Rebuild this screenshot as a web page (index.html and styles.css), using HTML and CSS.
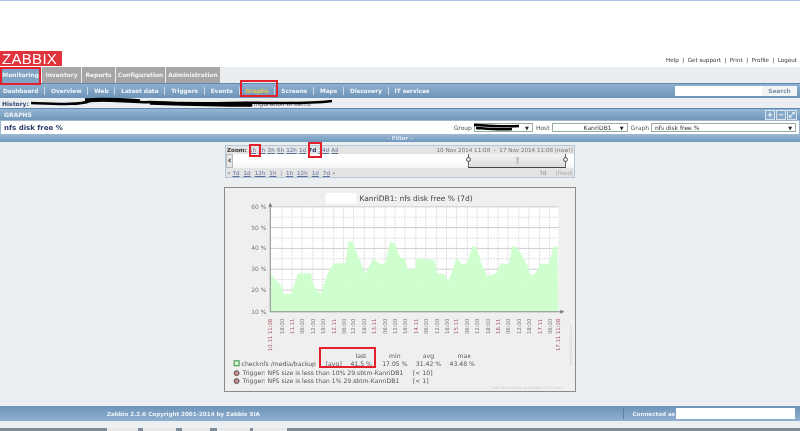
FILE: index.html
```html
<!DOCTYPE html>
<html lang="en">
<head>
<meta charset="utf-8">
<title>Zabbix graphs</title>
<link rel="stylesheet" href="styles.css">
</head>
<body>
<header class="top">
  <div class="logo">ZABBIX</div>
  <nav class="toplinks"><a>Help</a><i>|</i><a>Get support</a><i>|</i><a>Print</a><i>|</i><a>Profile</a><i>|</i><a>Logout</a></nav>
</header>
<nav class="menu">
  <a class="tab tab-on tab-mon">Monitoring</a><a class="tab tab-inv">Inventory</a><a class="tab tab-rep">Reports</a><a class="tab tab-con">Configuration</a><a class="tab tab-adm">Administration</a>
</nav>
<nav class="submenu">
  <a>Dashboard</a><i></i><a>Overview</a><i></i><a>Web</a><i></i><a>Latest data</a><i></i><a>Triggers</a><i></i><a>Events</a><i></i><a class="sub-on">Graphs</a><i></i><a>Screens</a><i></i><a>Maps</a><i></i><a>Discovery</a><i></i><a>IT services</a>
  <div class="search"><span class="search-in"></span><span class="search-btn">Search</span></div>
</nav>
<div class="history"><b>History:</b><span class="hist-rest">Configuration of items</span></div>
<div class="bar graphs-bar"><span>GRAPHS</span>
  <div class="bar-icons"><span class="ic">+</span><span class="ic">−</span><span class="ic">⤢</span></div>
</div>
<div class="title-row">
  <h1>nfs disk free %</h1>
  <div class="pickers">
    <label>Group</label><span class="sel sel-group"><em>▼</em></span>
    <label>Host</label><span class="sel sel-host"><u>KanriDB1</u><em>▼</em></span>
    <label>Graph</label><span class="sel sel-graph"><u class="left">nfs disk free %</u><em>▼</em></span>
  </div>
</div>
<div class="bar filter-bar">- Filter -</div>
<main class="content">
  <section class="scroller">
    <div class="sc-row sc-top">
      <div class="zoomlinks"><b>Zoom:</b><a>1h</a><a>2h</a><a>3h</a><a>6h</a><a>12h</a><a>1d</a><b class="z7">7d</b><a>14d</a><a>All</a></div>
      <div class="range">10 Nov 2014 11:08 &nbsp;-&nbsp; 17 Nov 2014 11:08 (now!)</div>
    </div>
    <div class="sc-mid"><span class="sc-arrow">‹</span>
      <div class="slider"><span class="knob knob-l"></span><span class="grip"></span><span class="knob knob-r"></span></div>
    </div>
    <div class="sc-row sc-bot">
      <div class="navlinks">&laquo;<a>7d</a><a>1d</a><a>12h</a><a>1h</a> | <a>1h</a><a>12h</a><a>1d</a><a>7d</a>&raquo;</div>
      <div class="fixed"><span>7d</span><span class="fx">|fixed|</span></div>
    </div>
  </section>
  <section class="graph">
    <svg class="chart" viewBox="224 186 352 205" width="352" height="205">
      <rect class="plot" x="269" y="205" width="291" height="106"/>
      <path class="grid-h" d="M269 226H560M269 247H560M269 268H560M269 289H560M269 205H560"/>
      <path class="grid-h2" d="M269 215.500H560M269 236.500H560M269 257.500H560M269 278.500H560M269 300H560"/>
      <path class="grid-v" d="M281 205V311M291 205V311M301 205V311M312 205V311M322 205V311M333 205V311M343 205V311M353 205V311M364 205V311M374 205V311M385 205V311M395 205V311M405 205V311M416 205V311M426 205V311M437 205V311M447 205V311M457 205V311M468 205V311M478 205V311M489 205V311M499 205V311M509 205V311M520 205V311M530 205V311M541 205V311M551 205V311"/>
      <path class="area" d="M269 311V272L280 285L283 293H290L297 272H310L313 285L320 293L327 272L333 262H345L348 240H352L360 260L365 272L373 257L380 263L385 262L390 240L395 242L400 256L405 258L408 268H415L417 257L435 259L438 272L445 273L449 280L457 257L463 263L468 262L473 245H477L482 262L488 275L497 272L502 262L510 263L513 245H518L528 263L532 274L537 272L542 262L550 263L555 245H559L560 311Z"/>
      <path class="axis" d="M269 204V311H563"/>
      <path class="axis-tip" d="M269 201L267 205H271ZM566 311L562 309V313Z"/>
      <rect class="mask" x="325" y="191" width="31" height="11"/>
      <text class="g-title" x="359" y="199">KanriDB1: nfs disk free % (7d)</text>
      <text class="yl" x="265" y="207">60 %</text><text class="yl" x="265" y="228">50 %</text><text class="yl" x="265" y="249">40 %</text><text class="yl" x="265" y="270">30 %</text><text class="yl" x="265" y="291">20 %</text><text class="yl" x="265" y="313">10 %</text>
      <text class="tk red" transform="rotate(-90 271 318)" x="271" y="318">10.11 11:08</text>
      <text class="tk" transform="rotate(-90 283 318)" x="283" y="318">18:00</text>
      <text class="tk red" transform="rotate(-90 293 318)" x="293" y="318">11.11</text>
      <text class="tk" transform="rotate(-90 303 318)" x="303" y="318">06:00</text>
      <text class="tk" transform="rotate(-90 314 318)" x="314" y="318">12:00</text>
      <text class="tk" transform="rotate(-90 324 318)" x="324" y="318">18:00</text>
      <text class="tk red" transform="rotate(-90 335 318)" x="335" y="318">12.11</text>
      <text class="tk" transform="rotate(-90 345 318)" x="345" y="318">06:00</text>
      <text class="tk" transform="rotate(-90 355 318)" x="355" y="318">12:00</text>
      <text class="tk" transform="rotate(-90 366 318)" x="366" y="318">18:00</text>
      <text class="tk red" transform="rotate(-90 376 318)" x="376" y="318">13.11</text>
      <text class="tk" transform="rotate(-90 387 318)" x="387" y="318">06:00</text>
      <text class="tk" transform="rotate(-90 397 318)" x="397" y="318">12:00</text>
      <text class="tk" transform="rotate(-90 407 318)" x="407" y="318">18:00</text>
      <text class="tk red" transform="rotate(-90 418 318)" x="418" y="318">14.11</text>
      <text class="tk" transform="rotate(-90 428 318)" x="428" y="318">06:00</text>
      <text class="tk" transform="rotate(-90 439 318)" x="439" y="318">12:00</text>
      <text class="tk" transform="rotate(-90 449 318)" x="449" y="318">18:00</text>
      <text class="tk red" transform="rotate(-90 459 318)" x="459" y="318">15.11</text>
      <text class="tk" transform="rotate(-90 470 318)" x="470" y="318">06:00</text>
      <text class="tk" transform="rotate(-90 480 318)" x="480" y="318">12:00</text>
      <text class="tk" transform="rotate(-90 491 318)" x="491" y="318">18:00</text>
      <text class="tk red" transform="rotate(-90 501 318)" x="501" y="318">16.11</text>
      <text class="tk" transform="rotate(-90 511 318)" x="511" y="318">06:00</text>
      <text class="tk" transform="rotate(-90 522 318)" x="522" y="318">12:00</text>
      <text class="tk" transform="rotate(-90 532 318)" x="532" y="318">18:00</text>
      <text class="tk red" transform="rotate(-90 543 318)" x="543" y="318">17.11</text>
      <text class="tk" transform="rotate(-90 553 318)" x="553" y="318">06:00</text>
      <text class="tk red" transform="rotate(-90 562 318)" x="562" y="318">17.11 11:08</text>
      <text class="lg" x="355" y="358">last</text><text class="lg" x="389" y="358">min</text><text class="lg" x="423" y="358">avg</text><text class="lg" x="458" y="358">max</text>
      <rect class="lg-box" x="232.500" y="360.500" width="5" height="5"/>
      <text class="lg" x="240" y="366">checknfs /media/backup</text><text class="lg" x="325" y="366">[avg]</text><text class="lg" x="350" y="366">41.5 %</text><text class="lg" x="382" y="366">17.05 %</text><text class="lg" x="416" y="366">31.42 %</text><text class="lg" x="450" y="366">43.48 %</text>
      <circle class="lg-dot" cx="235" cy="373" r="2.500"/><text class="lg" x="241" y="375">Trigger: NFS size is less than 10% 29.sbtm-KanriDB1</text><text class="lg" x="413" y="375">[&lt; 10]</text>
      <circle class="lg-dot" cx="235" cy="381" r="2.500"/><text class="lg" x="241" y="383">Trigger: NFS size is less than 1% 29.sbtm-KanriDB1</text><text class="lg" x="413" y="383">[&lt; 1]</text>
      <text class="note" x="492" y="389">Data from history. Generated in 0.51 sec</text>
      <text class="note" transform="rotate(-90 574 365)" x="574" y="365">http://www.zabbix.com</text>
    </svg>
  </section>
</main>
<footer class="footer">
  <span class="copy">Zabbix 2.2.6 Copyright 2001-2014 by Zabbix SIA</span>
  <div class="conn"><span>Connected as</span><span class="conn-name"></span></div>
</footer>
<div class="gap"></div>
<div class="taskbar"><span class="task task-a"></span><span class="task task-b"></span><span class="task task-c"></span><span class="task task-d"></span><span class="task task-e"></span></div>

<svg class="scrawl" width="800" height="431" viewBox="0 0 800 431" aria-hidden="true">
  <path class="ink" d="M31 103C60 104 80 105 90 101C110 99 130 103 150 102C170 103 190 104 230 103C260 102 300 105 332 101"/>
  <path class="ink2" d="M85 100C100 99 125 100 140 101M150 103C180 104 205 105 252 105"/>
  <path class="ink" d="M474 125C490 126 505 127 519 126M476 128C490 129 500 130 512 129"/>
</svg>
<div class="mark m-mon"></div><div class="mark m-gra"></div><div class="mark m-1h"></div><div class="mark m-7d"></div><div class="mark m-last"></div>
</body>
</html>
```
FILE: styles.css
```css
* { box-sizing: border-box; }
html, body { margin: 0; height: 431px; overflow: hidden; }
body { position: relative; width: 800px; background: #ebeff2; font-family: "DejaVu Sans", sans-serif; font-size: 6px; color: #333; filter: blur(.35px); }
a { color: inherit; }
i { font-style: normal; }

.top { height: 67px; background: #fff; border-top: 1px solid #a9c4e4; display: flex; justify-content: space-between; align-items: flex-end; }
.logo { width: 62px; height: 15px; margin-bottom: 1px; background: #e0343c; color: #fff; font: 15px/15px "Liberation Sans", sans-serif; letter-spacing: .3px; padding-left: 2px; }
.toplinks { display: flex; gap: 3.500px; padding: 0 3px 4px 0; font-size: 5.600px; color: #333; }

.menu { height: 16px; background: #e9edf0; display: flex; }
.tab { display: flex; align-items: center; justify-content: center; height: 16px; background: #a6a6a6; color: #f4f4f4; font-weight: bold; font-size: 5.900px; }
.tab-on { background: #7fa3c4; }
.tab-mon { width: 41px; margin-right: 1px; }
.tab-inv { width: 39px; margin-right: 1px; }
.tab-rep { width: 33px; margin-right: 1px; }
.tab-con { width: 49px; margin-right: 1px; }
.tab-adm { width: 54px; }

.submenu { height: 15px; background: linear-gradient(#8eb0cf, #6d94b9); border-top: 1px solid #5f89b0; display: flex; align-items: center; color: #f2f6fa; font-weight: bold; font-size: 5.800px; padding-left: 3px; }
.submenu i { width: 1px; height: 8px; background: #c7d8e8; margin: 0 5.850px; }
.sub-on { color: #e6c84e; }
.search { margin-left: auto; margin-right: 3px; display: flex; height: 10px; }
.search-in { width: 87px; background: #fff; }
.search-btn { width: 35px; background: #f2f4f6; color: #7a8ea3; display: flex; align-items: center; justify-content: center; }

.history { height: 10px; display: flex; align-items: center; padding-left: 2px; color: #3b4a72; background: #ebeff2; gap: 215px; }
.hist-rest { color: #556; }

.bar { background: linear-gradient(#95b5d2, #7097bc); color: #eef3f8; font-weight: bold; }
.graphs-bar { height: 12px; padding-left: 4px; display: flex; justify-content: space-between; align-items: center; border-top: 1px solid #5f89b0; }
.bar-icons { display: flex; gap: 1px; padding-right: 3px; }
.ic { width: 10px; height: 10px; border: 1px solid #d8e4ef; color: #fff; font-size: 7px; line-height: 8px; text-align: center; background: #86a9ca; }

.title-row { height: 15px; background: #fff; border: 1px solid #9db7d0; display: flex; justify-content: space-between; align-items: center; padding: 0 3px; }
h1 { margin: 0; font-size: 7px; color: #2c3c66; font-weight: bold; }
.pickers { display: flex; align-items: center; color: #555; font-size: 6px; }
.pickers label { margin-right: 2px; }
.sel { height: 9px; border: 1px solid #9aa; background: #fff; display: flex; align-items: center; justify-content: space-between; margin-right: 3px; font-size: 6px; padding: 0 3px; }
.sel:last-child { margin-right: 0; }
.sel u { text-decoration: none; margin-left: 28px; color: #333; }
.sel u.left { margin-left: 0; }
.sel em { font-style: normal; font-size: 5px; color: #222; margin-left: auto; }
.sel-group { width: 59px; }
.sel-host { width: 76px; }
.sel-graph { width: 145px; }

.filter-bar { height: 7px; font-size: 5.500px; line-height: 7px; text-align: center; color: #dce7f1; }

.content { height: 264px; display: flex; flex-direction: column; align-items: center; padding-top: 3px; }
.scroller { width: 350px; height: 33px; border: 1px solid #b6c7d9; background: #e4e4e4; display: flex; flex-direction: column; }
.sc-row { display: flex; justify-content: space-between; align-items: center; padding: 0 1px; color: #6d7b90; font-size: 5.600px; }
.sc-top { height: 8px; }
.sc-bot { height: 9px; color: #7a8699; }
.zoomlinks { display: flex; gap: 2.200px; color: #5b6f9a; }
.zoomlinks a, .navlinks a { text-decoration: underline; }
.zoomlinks b { color: #333; }
.zoomlinks .z7 { color: #1f2f6b; }
.navlinks a { margin: 0 2px; color: #5b6f9a; }
.range { color: #777; }
.fixed { display: flex; gap: 9px; }
.fx { color: #aaa; }
.sc-mid { height: 14px; position: relative; display: flex; background: linear-gradient(#fff 55%, #f4f4f4); }
.sc-arrow { width: 7px; border: 1px solid #bbb; background: #e6e6e6; color: #222; font-size: 9px; line-height: 11px; text-align: center; font-weight: bold; }
.slider { position: absolute; left: 242px; width: 98px; top: 0; bottom: 0; border-bottom: 1px solid #444; border-left: 1px solid #666; border-right: 1px solid #666; background: linear-gradient(#f4f4f4, #dcdcdc); }
.knob { position: absolute; top: 3px; width: 5px; height: 5px; border: 1px solid #555; border-radius: 50%; background: #eee; }
.knob-l { left: -3px; }
.knob-r { right: -3px; }
.grip { position: absolute; left: 47px; top: 3px; width: 3px; height: 7px; background: #c9c9c9; }

.graph { margin-top: 9px; width: 352px; height: 205px; }
.chart { display: block; background: #efefef; border: 1px solid #8a8a8a; }
.plot { fill: #fff; }
.grid-h { stroke: #ccc; stroke-width: 1; fill: none; }
.grid-h2 { stroke: #ddd; stroke-width: 1; stroke-dasharray: 2 1; fill: none; }
.grid-v { stroke: #ddd; stroke-width: 1; stroke-dasharray: 2 1; fill: none; }
.area { fill: #ccffcc; fill-opacity: .95; }
.axis { fill: none; stroke: #888; stroke-width: 1; }
.axis-tip { fill: #777; }
.mask { fill: #fff; }
.g-title { font-size: 7.600px; fill: #444; font-family: "DejaVu Sans", sans-serif; }
.yl { font-size: 6px; fill: #777; text-anchor: end; }
.tk { font-size: 5.400px; fill: #777; text-anchor: end; }
.tk.red { fill: #a85a66; }
.lg { font-size: 6.200px; fill: #555; }
.lg-box { fill: #ccffcc; stroke: #3b8a4a; stroke-width: 1; }
.lg-dot { fill: #c98a8a; stroke: #555; stroke-width: 1; }
.note { font-size: 3.500px; fill: #ccc; }

.footer { height: 15px; background: linear-gradient(#6d94b9, #8fb0cf); display: flex; align-items: center; color: #eef3f8; font-weight: bold; font-size: 5.600px; padding-left: 107px; justify-content: space-between; }
.conn { display: flex; align-items: center; gap: 1px; padding-right: 5px; border-left: 1px solid #5c84aa; padding-left: 8px; }
.conn-name { width: 119px; height: 11px; background: #fff; }
.gap { height: 7px; background: #ebeff2; }
.taskbar { height: 4px; background: #7e8a96; display: flex; }
.task { background: #e8e8e8; height: 4px; }
.task-a { margin-left: 107px; width: 31px; }
.task-b { margin-left: 5px; width: 33px; }
.task-c { margin-left: 6px; width: 28px; }
.task-d { margin-left: 7px; width: 33px; }
.task-e { margin-left: 3px; width: 34px; }

.scrawl { position: absolute; left: 0; top: 0; pointer-events: none; }
.ink { fill: none; stroke: #000; stroke-width: 2.500; }
.ink2 { fill: none; stroke: #000; stroke-width: 3.500; }
.mark { position: absolute; border: 2px solid #e3202c; }
.m-mon { left: 0; top: 67px; width: 41px; height: 18px; }
.m-gra { left: 240px; top: 80px; width: 38px; height: 17px; }
.m-1h { left: 249px; top: 144px; width: 12px; height: 13px; }
.m-7d { left: 308px; top: 142px; width: 14px; height: 16px; }
.m-last { left: 319px; top: 347px; width: 57px; height: 21px; }
```
